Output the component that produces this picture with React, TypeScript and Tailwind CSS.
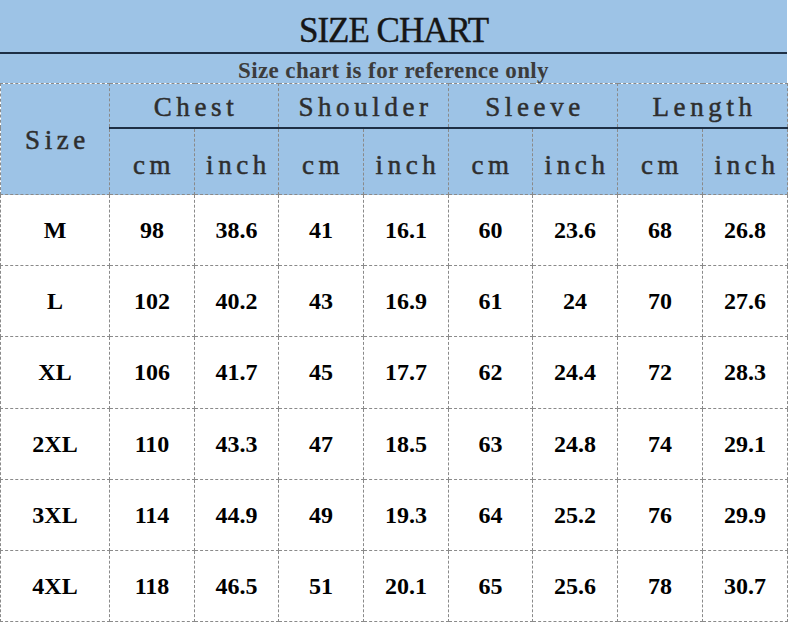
const GROUPS = ["Chest", "Shoulder", "Sleeve", "Length"];

const ROWS: [string, ...string[]][] = [
  ["M", "98", "38.6", "41", "16.1", "60", "23.6", "68", "26.8"],
  ["L", "102", "40.2", "43", "16.9", "61", "24", "70", "27.6"],
  ["XL", "106", "41.7", "45", "17.7", "62", "24.4", "72", "28.3"],
  ["2XL", "110", "43.3", "47", "18.5", "63", "24.8", "74", "29.1"],
  ["3XL", "114", "44.9", "49", "19.3", "64", "25.2", "76", "29.9"],
  ["4XL", "118", "46.5", "51", "20.1", "65", "25.6", "78", "30.7"],
];

const COLS = [
  "w-[109px]",
  "w-[85px]",
  "w-[84px]",
  "w-[85px]",
  "w-[85px]",
  "w-[84px]",
  "w-[85px]",
  "w-[85px]",
  "w-[85px]",
];

export default function App() {
  return (
    <div className="h-[626px] w-[790px] bg-white font-['Liberation_Serif',serif]">
      <div className="w-[787px]">
        {/* title */}
        <div className="flex h-[54px] items-center justify-center border-b-[2px] border-[#1d2f45] bg-[#9dc3e6] pt-[8px]">
          <h1 className="text-[35px] leading-none tracking-[-1px] text-[#161616] [-webkit-text-stroke:0.4px_#161616]">
            SIZE CHART
          </h1>
        </div>
        <div className="flex h-[29px] items-end justify-center bg-[#9dc3e6] pb-[1px]">
          <p className="text-[23px] font-bold leading-none tracking-[0.4px] text-[#3c3c3c]">
            Size chart is for reference only
          </p>
        </div>

        <table className="w-[787px] table-fixed border-collapse">
          <colgroup>
            {COLS.map((c, i) => (
              <col key={i} className={c} />
            ))}
          </colgroup>
          <thead className="bg-[#9dc3e6] text-[27px] leading-[30px] font-normal tracking-[4.6px] text-[#2e2e2e] [-webkit-text-stroke:0.5px_#2e2e2e]">
            <tr className="h-[44px]">
              <th
                rowSpan={2}
                className="border border-dashed border-[#8a8a8a] pl-[5px] pt-[2px] font-normal"
              >
                Size
              </th>
              {GROUPS.map((g) => (
                <th
                  key={g}
                  colSpan={2}
                  className="border border-dashed border-[#8a8a8a] border-b-[2px] border-b-[#1d2f45] pl-[4px] pt-[3px] font-normal [border-bottom-style:solid]"
                >
                  {g}
                </th>
              ))}
            </tr>
            <tr className="h-[67px]">
              {GROUPS.map((g) => [
                <th
                  key={g + "cm"}
                  className="border border-dashed border-[#8a8a8a] pl-[4px] pt-[8px] font-normal"
                >
                  cm
                </th>,
                <th
                  key={g + "inch"}
                  className="border border-dashed border-[#8a8a8a] pl-[4px] pt-[8px] font-normal"
                >
                  inch
                </th>,
              ])}
            </tr>
          </thead>
          <tbody className="text-[24px] font-bold text-black">
            {ROWS.map((r) => (
              <tr key={r[0]} className="h-[71.2px]">
                {r.map((v, i) => (
                  <td
                    key={i}
                    className="border border-dashed border-[#8a8a8a] text-center"
                  >
                    {v}
                  </td>
                ))}
              </tr>
            ))}
          </tbody>
        </table>
      </div>
    </div>
  );
}
